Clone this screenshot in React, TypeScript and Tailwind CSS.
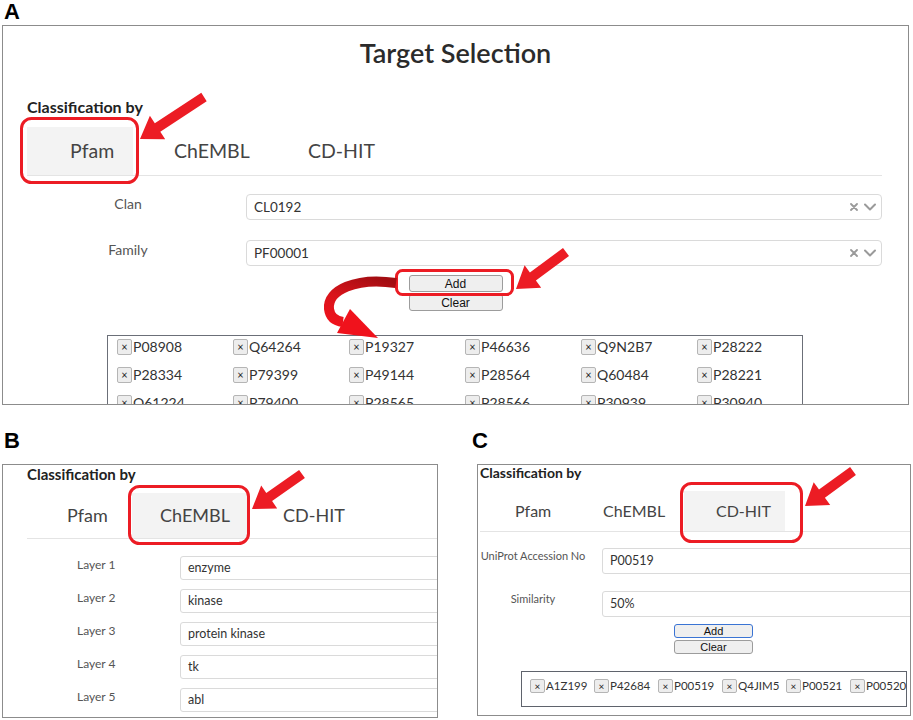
import React from 'react';

const RED = '#ec1c24';

const A_TAGS = [
  'P08908', 'Q64264', 'P19327', 'P46636', 'Q9N2B7', 'P28222',
  'P28334', 'P79399', 'P49144', 'P28564', 'Q60484', 'P28221',
  'Q61224', 'P79400', 'P28565', 'P28566', 'P30939', 'P30940',
];

const C_TAGS = ['A1Z199', 'P42684', 'P00519', 'Q4JIM5', 'P00521', 'P00520'];

const LAYERS = [
  ['Layer 1', 'enzyme'],
  ['Layer 2', 'kinase'],
  ['Layer 3', 'protein kinase'],
  ['Layer 4', 'tk'],
  ['Layer 5', 'abl'],
];

// polygon for a straight block arrow, tail -> tip
function arrowPts(x1: number, y1: number, x2: number, y2: number, s = 10, hl = 21, hw = 28) {
  const dx = x2 - x1;
  const dy = y2 - y1;
  const len = Math.hypot(dx, dy);
  const ux = dx / len;
  const uy = dy / len;
  const px = -uy;
  const py = ux;
  const bx = x2 - ux * hl;
  const by = y2 - uy * hl;
  const p = (x: number, y: number) => `${x.toFixed(1)},${y.toFixed(1)}`;
  return [
    p(x1 + (px * s) / 2, y1 + (py * s) / 2),
    p(bx + (px * s) / 2, by + (py * s) / 2),
    p(bx + (px * hw) / 2, by + (py * hw) / 2),
    p(x2, y2),
    p(bx - (px * hw) / 2, by - (py * hw) / 2),
    p(bx - (px * s) / 2, by - (py * s) / 2),
    p(x1 - (px * s) / 2, y1 - (py * s) / 2),
  ].join(' ');
}

function PanelLabel({ children }: { children: React.ReactNode }) {
  return (
    <span className="font-['Liberation_Sans',Arial,sans-serif] text-[22px] font-bold leading-[24px] text-black">
      {children}
    </span>
  );
}

function Chip({ id, small = false }: { id: string; small?: boolean }) {
  return (
    <div className="flex items-center whitespace-nowrap">
      <span
        className={
          small
            ? 'flex h-[14px] w-[15px] shrink-0 items-center justify-center rounded-[2px] border border-[#b5b5b5] bg-[#ededed] text-[10px] leading-none text-[#222]'
            : 'flex h-[16px] w-[15px] shrink-0 items-center justify-center rounded-[2px] border border-[#b5b5b5] bg-[#ededed] text-[11px] leading-none text-[#222]'
        }
      >
        ×
      </span>
      <span className={small ? 'ml-[1px] text-[11.5px] text-[#333]' : 'ml-[1px] text-[14px] text-[#333]'}>
        {id}
      </span>
    </div>
  );
}

function SelectBox({ value }: { value: string }) {
  return (
    <div className="ml-[17px] flex h-[26px] flex-1 items-center rounded-[4px] border border-[#dadada] pl-[7px] pr-[5px]">
      <span className="flex-1 text-[13.5px] text-[#333]">{value}</span>
      <svg width="8" height="8" viewBox="0 0 8 8" className="mr-[6px]">
        <path d="M1 1L7 7M7 1L1 7" stroke="#9a9a9a" strokeWidth="1.8" strokeLinecap="round" />
      </svg>
      <svg width="12" height="8" viewBox="0 0 12 8">
        <path d="M1 1.5L6 6.5L11 1.5" fill="none" stroke="#9a9a9a" strokeWidth="2" strokeLinecap="round" strokeLinejoin="round" />
      </svg>
    </div>
  );
}

function Overlay() {
  return (
    <svg className="pointer-events-none absolute left-0 top-0" width="913" height="720" viewBox="0 0 913 720">
      <defs>
        <linearGradient id="curve" x1="395" y1="283" x2="378" y2="338" gradientUnits="userSpaceOnUse">
          <stop offset="0" stopColor="#a30d12" />
          <stop offset="0.5" stopColor="#d8141b" />
          <stop offset="1" stopColor="#f0121c" />
        </linearGradient>
      </defs>
      {/* A: Pfam tab */}
      <rect x="21.5" y="118.5" width="116" height="64" rx="10" fill="none" stroke={RED} strokeWidth="3" />
      <polygon points={arrowPts(204, 97, 140, 139)} fill={RED} />
      {/* A: Add button */}
      <rect x="396.5" y="270.5" width="116" height="24" rx="6" fill="none" stroke={RED} strokeWidth="3" />
      <polygon points={arrowPts(566, 252, 516, 289)} fill={RED} />
      {/* A: curved arrow into the tag list */}
      <path
        d="M 396 283 C 356 277, 327 290, 329 309 C 330 317, 335 321, 343 322"
        fill="none"
        stroke="url(#curve)"
        strokeWidth="10"
      />
      <polygon points="337,333 350,309 378,338" fill="#f0121c" />
      {/* B */}
      <rect x="129.5" y="486.5" width="119" height="57" rx="10" fill="none" stroke={RED} strokeWidth="3" />
      <polygon points={arrowPts(302, 474, 252, 509)} fill={RED} />
      {/* C */}
      <rect x="681.5" y="483.5" width="120" height="58" rx="10" fill="none" stroke={RED} strokeWidth="3" />
      <polygon points={arrowPts(853, 471, 805, 506)} fill={RED} />
    </svg>
  );
}

export default function App() {
  return (
    <div className="relative h-[720px] w-[913px] overflow-hidden bg-white font-['Lato','Noto_Sans',sans-serif] text-[#333]">
      {/* Panel A */}
      <div className="h-[25px] pl-[4px]">
        <PanelLabel>A</PanelLabel>
      </div>
      <div className="ml-[2px] h-[380px] w-[907px] overflow-hidden border border-[#8c8c8c]">
        <h1 className="pt-[10px] text-center text-[27px] font-semibold leading-[34px] text-[#2b2b2b]">
          Target Selection
        </h1>
        <div className="pl-[24px] pr-[26px]">
          <div className="mt-[27px] text-[16px] font-bold leading-[20px] text-[#222]">Classification by</div>
          <div className="mt-[10px] flex h-[49px] border-b border-[#e4e4e4] text-[19.5px] text-[#444]">
            <div className="flex w-[106px] items-center bg-[#f3f3f3] pl-[43px]">Pfam</div>
            <div className="flex w-[175px] items-center pl-[41px]">ChEMBL</div>
            <div className="flex items-center">CD-HIT</div>
          </div>
          <div className="mt-[18px] flex items-start">
            <div className="w-[202px] shrink-0 text-center text-[14px] leading-[20px] text-[#555]">Clan</div>
            <SelectBox value="CL0192" />
          </div>
          <div className="mt-[20px] flex items-start">
            <div className="w-[202px] shrink-0 text-center text-[14px] leading-[20px] text-[#555]">Family</div>
            <SelectBox value="PF00001" />
          </div>
        </div>
        <div className="mt-[9px] flex flex-col items-center gap-[2px] font-['Liberation_Sans',Arial,sans-serif] text-[12px] text-[#111]">
          <button className="h-[17px] w-[94px] rounded-[3px] border border-[#9c9c9c] bg-[#efefef] leading-none">Add</button>
          <button className="h-[17px] w-[94px] rounded-[3px] border border-[#9c9c9c] bg-[#efefef] leading-none">Clear</button>
        </div>
        <div className="ml-[104px] mt-[24px] h-[100px] w-[696px] border border-[#6b6f78] pl-[9px]">
          <div className="grid grid-cols-[repeat(6,116px)] gap-y-[11px]">
            {A_TAGS.map((t) => (
              <div key={t} className="h-[17px]">
                <Chip id={t} />
              </div>
            ))}
          </div>
        </div>
      </div>

      {/* Panels B and C */}
      <div className="mt-[24px] flex">
        <div className="w-[438px]">
          <div className="h-[35px] pl-[4px]">
            <PanelLabel>B</PanelLabel>
          </div>
          <div className="ml-[2px] h-[254px] w-[436px] overflow-hidden border border-[#8c8c8c]">
            <div className="pl-[24px]">
              <div className="text-[15px] font-bold leading-[18px] text-[#222]">Classification by</div>
              <div className="mt-[10px] flex h-[46px] border-b border-[#e4e4e4] text-[18px] text-[#444]">
                <div className="flex w-[105px] items-center pl-[40px]">Pfam</div>
                <div className="flex w-[116px] items-center bg-[#f3f3f3] pl-[28px]">ChEMBL</div>
                <div className="flex items-center pl-[35px]">CD-HIT</div>
              </div>
            </div>
            <div className="mt-[17px] flex flex-col gap-[9px]">
              {LAYERS.map(([label, value]) => (
                <div key={label} className="flex items-start">
                  <div className="w-[177px] shrink-0 pl-[74px] text-[12px] leading-[18px] text-[#555]">{label}</div>
                  <div className="flex h-[24px] w-[300px] shrink-0 items-center rounded-[3px] border border-[#dadada] pl-[7px] text-[12.5px] text-[#333]">
                    {value}
                  </div>
                </div>
              ))}
            </div>
          </div>
        </div>

        <div className="ml-[34px] w-[441px]">
          <div className="h-[35px]">
            <PanelLabel>C</PanelLabel>
          </div>
          <div className="ml-[5px] h-[252px] w-[434px] overflow-hidden border border-[#8c8c8c]">
            <div className="pl-[2px]">
              <div className="text-[14px] font-bold leading-[16px] text-[#222]">Classification by</div>
              <div className="mt-[10px] flex h-[41px] border-b border-[#e4e4e4] text-[16px] text-[#444]">
                <div className="flex w-[88px] items-center pl-[35px]">Pfam</div>
                <div className="flex w-[116px] items-center pl-[35px]">ChEMBL</div>
                <div className="flex w-[101px] items-center bg-[#f3f3f3] pl-[32px]">CD-HIT</div>
              </div>
            </div>
            <div className="mt-[16px] flex items-start">
              <div className="w-[110px] shrink-0 whitespace-nowrap text-center text-[11px] leading-[16px] text-[#555]">UniProt Accession No</div>
              <div className="ml-[14px] flex h-[26px] w-[330px] shrink-0 items-center rounded-[3px] border border-[#dadada] pl-[7px] text-[12.5px] text-[#333]">
                P00519
              </div>
            </div>
            <div className="mt-[17px] flex items-start">
              <div className="w-[110px] shrink-0 text-center text-[11px] leading-[16px] text-[#555]">Similarity</div>
              <div className="ml-[14px] flex h-[26px] w-[330px] shrink-0 items-center rounded-[3px] border border-[#dadada] pl-[7px] text-[12.5px] text-[#333]">
                50%
              </div>
            </div>
            <div className="ml-[196px] mt-[7px] flex w-[79px] flex-col gap-[2px] font-['Liberation_Sans',Arial,sans-serif] text-[11px] text-[#111]">
              <button className="h-[14px] w-[79px] rounded-[3px] border-[1.5px] border-[#3a74d4] bg-[#efefef] leading-none">Add</button>
              <button className="h-[14px] w-[79px] rounded-[3px] border border-[#9c9c9c] bg-[#efefef] leading-none">Clear</button>
            </div>
            <div className="ml-[43px] mt-[17px] h-[36px] w-[386px] border border-[#5f636c] pl-[8px] pt-[5px]">
              <div className="grid grid-cols-[repeat(6,64px)]">
                {C_TAGS.map((t) => (
                  <Chip key={t} id={t} small />
                ))}
              </div>
            </div>
          </div>
        </div>
      </div>

      <Overlay />
    </div>
  );
}
